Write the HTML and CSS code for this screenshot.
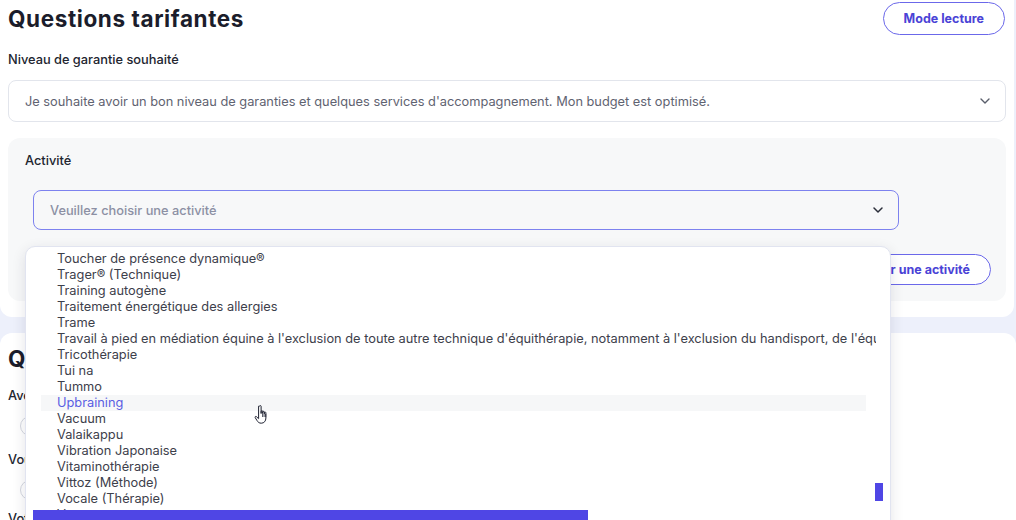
FILE: index.html
```html
<!DOCTYPE html>
<html lang="fr">
<head>
    <meta charset="UTF-8">
    <title>Questions tarifantes</title>
    <link rel="stylesheet" href="styles.css">
</head>
<body>
    <div class="card top-card">
        <div class="title-row">
            <h1>Questions tarifantes</h1>
            <button class="btn-outline btn-mode">Mode lecture</button>
        </div>
        <div class="field">
            <div class="label">Niveau de garantie souhaité</div>
            <div class="select">
                <span class="select-value">Je souhaite avoir un bon niveau de garanties et quelques services d'accompagnement. Mon budget est optimisé.</span>
                <svg class="chevron" width="12" height="8" viewBox="0 0 12 8"><path d="M2 2l4 4 4-4" fill="none" stroke="#5a5e6b" stroke-width="1.4" stroke-linecap="round" stroke-linejoin="round"/></svg>
            </div>
        </div>
        <div class="activity-card">
            <div class="label">Activité</div>
            <div class="select select-activity">
                <span class="placeholder">Veuillez choisir une activité</span>
                <svg class="chevron" width="12" height="8" viewBox="0 0 12 8"><path d="M2 2l4 4 4-4" fill="none" stroke="#2b2e3a" stroke-width="1.5" stroke-linecap="round" stroke-linejoin="round"/></svg>
            </div>
            <div class="actions">
                <button class="btn-outline">Ajouter une activité</button>
            </div>

            <!-- open dropdown -->
            <div class="dropdown">
                <ul class="options">
                    <li>Toucher de présence dynamique®</li>
                    <li>Trager® (Technique)</li>
                    <li>Training autogène</li>
                    <li>Traitement énergétique des allergies</li>
                    <li>Trame</li>
                    <li>Travail à pied en médiation équine à l'exclusion de toute autre technique d'équithérapie, notamment à l'exclusion du handisport, de l'équitation</li>
                    <li>Tricothérapie</li>
                    <li>Tui na</li>
                    <li>Tummo</li>
                    <li class="hover">Upbraining</li>
                    <li>Vacuum</li>
                    <li>Valaikappu</li>
                    <li>Vibration Japonaise</li>
                    <li>Vitaminothérapie</li>
                    <li>Vittoz (Méthode)</li>
                    <li>Vocale (Thérapie)</li>
                    <li>Voyage sonore</li>
                </ul>
                <div class="thumb-v"></div>
                <div class="thumb-h"></div>
            </div>
        </div>
    </div>

    <div class="card second-card">
        <h1>Questions complémentaires</h1>
        <div class="label">Avez-vous des salariés ?</div>
        <div class="radios">
            <span class="radio"></span> Oui
            <span class="radio"></span> Non
        </div>
        <div class="label">Vous exercez en cabinet ?</div>
        <div class="radios">
            <span class="radio"></span> Oui
            <span class="radio"></span> Non
        </div>
        <div class="label label-last">Votre chiffre d'affaires</div>
    </div>

    <svg class="cursor" width="18" height="24" viewBox="0 0 18 24">
        <path d="M5.5 2.2c0-.8 1.6-.8 1.6 0v7.3l.1-2.2c0-.8 1.5-.8 1.5 0v2.3l.1-1.7c0-.8 1.5-.8 1.5 0v2l.1-1.2c0-.8 1.5-.8 1.5 0v5.3c0 3-1.8 5.2-4.6 5.2-2.1 0-3.3-1-4.4-2.8L1.2 13.6c-.5-.8.5-1.6 1.2-1l2.1 2.1.1-.1V2.2z" fill="#fff" stroke="#1d2030" stroke-width="1" stroke-linejoin="round"/>
        <path d="M8.6 10v3M10.1 10v3M11.7 10v3" stroke="#1d2030" stroke-width=".8"/>
    </svg>
</body>
</html>
```

FILE: styles.css
```css
/* Base */
body {
    margin: 0;
    background-color: #edf0fb;
    font-family: Inter, "Open Sans", sans-serif;
    color: #22252f;
    font-size: 12.8px;
    overflow: hidden;
    height: 520px;
    position: relative;
}
.card {
    background-color: #fff;
    padding: 0 8px;
}
.top-card {
    border-radius: 0 0 12px 12px;
    padding-top: 2px;
    padding-bottom: 16px;
    margin-right: 2px;
}
h1 {
    margin: 0;
    font-size: 22.5px;
    font-weight: 700;
    color: #1b1d2b;
    letter-spacing: 0.6px;
}
.title-row {
    display: flex;
    justify-content: space-between;
    align-items: center;
    padding-right: 1px;
}
.btn-outline {
    background: #fff;
    border: 1px solid #6b68ea;
    border-radius: 17px;
    color: #4a43d6;
    font-family: inherit;
    font-weight: 700;
    font-size: 12.5px;
    height: 31px;
    padding: 0 20px;
}
.btn-mode {
    height: 33px;
    padding: 0 20px;
}
.label {
    font-weight: 500;
    line-height: 20px;
    color: #22252f;
}
.field {
    margin-top: 15px;
}
.field .label {
    margin-bottom: 10px;
}
/* Selects */
.select {
    height: 40px;
    border: 1px solid #e2e5ec;
    border-radius: 8px;
    display: flex;
    align-items: center;
    justify-content: space-between;
    padding: 0 14px 0 16px;
}
.select-value {
    color: #5f6371;
}
.chevron {
    display: block;
}
/* Activity block */
.activity-card {
    margin-top: 16px;
    background-color: #f7f8f9;
    border-radius: 12px;
    padding: 13px 15px 16px 17px;
    position: relative;
}
.select-activity {
    margin: 19px 0 0 8px;
    width: 834px;
    height: 38px;
    border-color: #7d82ef;
    padding-left: 16px;
    padding-right: 14px;
}
.placeholder {
    color: #8c90a4;
    font-weight: 500;
}
.actions {
    display: flex;
    justify-content: flex-end;
    margin-top: 24px;
}
/* Dropdown list */
.dropdown {
    position: absolute;
    left: 17px;
    top: 108px;
    width: 864px;
    height: 300px;
    background: #fff;
    border: 1px solid #e1e4f0;
    border-radius: 10px;
    box-shadow: 0 4px 14px rgba(30, 35, 60, 0.12);
    overflow: hidden;
    z-index: 2;
}
.options {
    list-style: none;
    margin: 0;
    padding: 4px 0 0 15px;
    width: 835px;
    overflow: hidden;
}
.options li {
    width: 809px;
    line-height: 16px;
    padding-left: 16px;
    color: #3d404b;
    white-space: nowrap;
}
.options li.hover {
    background-color: #f6f7f8;
    color: #5a5ee3;
}
.thumb-v {
    position: absolute;
    left: 849px;
    top: 236px;
    width: 8px;
    height: 18px;
    background: #4f46e5;
}
.thumb-h {
    position: absolute;
    left: 7px;
    top: 263px;
    width: 555px;
    height: 12px;
    background: #4f46e5;
}
/* Second block */
.second-card {
    margin-top: 16px;
    border-radius: 12px 12px 0 0;
    padding-top: 12px;
    height: 300px;
}
.second-card .label {
    margin-top: 14px;
}
.second-card .label-last {
    margin-top: 9px;
}
.radios {
    margin: 10px 0 0 12px;
    display: flex;
    align-items: center;
    gap: 8px;
}
.radio {
    width: 18px;
    height: 18px;
    border: 1px solid #d4d7df;
    border-radius: 50%;
}
.cursor {
    position: absolute;
    left: 254px;
    top: 404px;
    z-index: 5;
}
```
